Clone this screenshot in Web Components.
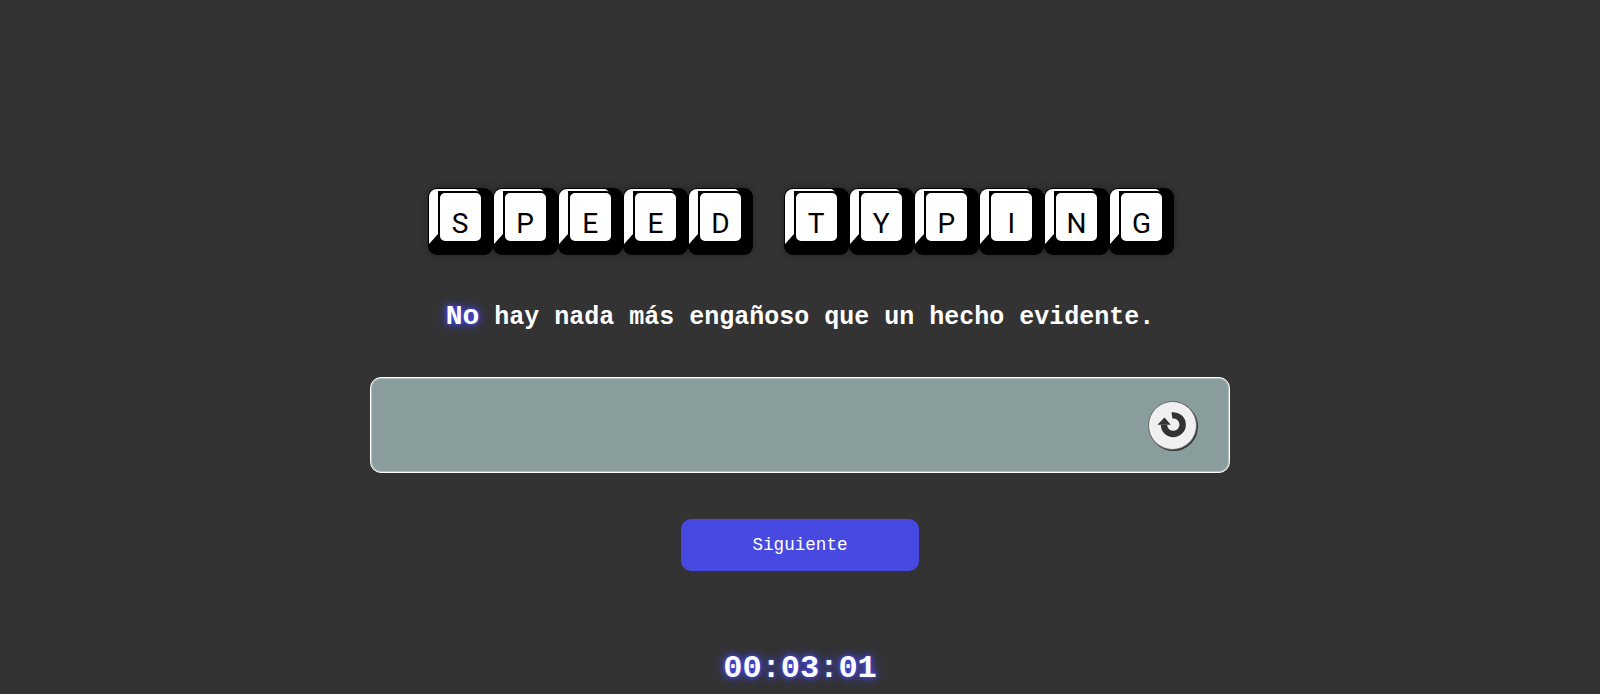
<!DOCTYPE html>
<html lang="es">
<head>
<meta charset="utf-8">
<title>Speed Typing</title>
<style>
html, body { margin: 0; height: 100%; background: #333333; overflow: hidden; }
</style>
</head>
<body>
<typing-app></typing-app>
<script>
class KeyCap extends HTMLElement {
  constructor() {
    super();
    this.attachShadow({ mode: 'open' }).innerHTML = `<style>
:host {
  display: block;
  box-sizing: border-box;
  width: 65.1px;
  height: 67px;
  flex: none;
  padding: 1px 14px 11px 1px;
  background: #000;
  border-radius: 9px;
  box-shadow: 0 0 8px rgba(0, 0, 0, .35);
  font: 400 28px/1 Roboto, sans-serif;
  color: #000;
}
.bevel {
  box-sizing: border-box;
  height: 55px;
  border-style: solid;
  border-width: 2.5px 0 10px 9px;
  border-color: #fff #000 #000 #fff;
  border-radius: 8px 5px 0 0;
}
/* the cap hangs past the bevel on the right and at the bottom */
.cap {
  box-sizing: border-box;
  height: 51.5px;
  margin-right: -4px;
  display: flex;
  align-items: flex-end;
  justify-content: center;
  padding-bottom: 2.5px;
  background: #fff;
  border: 2px solid #000;
  border-radius: 7px;
}
</style><div class="bevel"><div class="cap"><slot></slot></div></div>`;
  }
}
customElements.define('key-cap', KeyCap);

class KeyTitle extends HTMLElement {
  constructor() {
    super();
    let root = this.attachShadow({ mode: 'open' });
    let words = (this.getAttribute('text') || '').split(' ');
    root.innerHTML = `<style>
:host { display: flex; gap: 30.5px; margin-left: 1.6px; }
.word { display: flex; }
</style>` + words.map(w =>
      `<div class="word">${Array.from(w).map(c => `<key-cap>${c}</key-cap>`).join('')}</div>`
    ).join('');
  }
}
customElements.define('key-title', KeyTitle);

class TypingBox extends HTMLElement {
  constructor() {
    super();
    this.attachShadow({ mode: 'open' }).innerHTML = `<style>
:host {
  display: flex;
  box-sizing: border-box;
  width: 860px;
  height: 96px;
  align-items: center;
  justify-content: flex-end;
  padding-right: 32px;
  background: #8a9d9d;
  border: 1px solid #fff;
  border-radius: 11px;
  box-shadow: inset 0 0 0 1px rgba(255, 255, 255, .35);
}
button {
  display: flex;
  align-items: center;
  justify-content: center;
  width: 49px;
  height: 49px;
  padding: 0;
  border: 1px solid #666;
  border-radius: 50%;
  background: #f0f0f0;
  box-shadow: 1px 1px 0 #333;
}
</style><button aria-label="Reiniciar"><svg width="34" height="34" viewBox="0 0 32 32">
<path d="M15 7A8.8 8.8 0 1 1 7.5 15.7" fill="none" stroke="#333" stroke-width="6"/>
<path d="M1.3 15.7L8 9L14 15.7Z" fill="#333"/>
</svg></button>`;
  }
}
customElements.define('typing-box', TypingBox);

class NextButton extends HTMLElement {
  constructor() {
    super();
    this.attachShadow({ mode: 'open' }).innerHTML = `<style>
:host {
  display: flex;
  width: 238px;
  height: 52px;
  align-items: center;
  justify-content: center;
  background: #4849e0;
  border-radius: 10px;
  color: #fff;
  font: 400 17.6px "Liberation Mono", monospace;
}
</style><slot></slot>`;
  }
}
customElements.define('next-button', NextButton);

class TypingApp extends HTMLElement {
  constructor() {
    super();
    this.attachShadow({ mode: 'open' }).innerHTML = `<style>
:host {
  display: flex;
  flex-direction: column;
  align-items: center;
  padding-top: 188px;
  font-family: "Liberation Mono", monospace;
  color: #fff;
  --glow: 0 0 12px #4849e0, 0 0 6px #4849e0, 0 0 3px #4849e0;
}
.quote {
  margin-top: 48px;
  font-size: 25px;
  font-weight: 700;
  line-height: 29px;
}
.quote b { font-size: 28px; line-height: 0; text-shadow: var(--glow); }
typing-box { margin-top: 45px; }
next-button { margin-top: 46px; }
.timer {
  margin-top: 80px;
  font-size: 32px;
  font-weight: 700;
  line-height: 36px;
  text-shadow: var(--glow);
}
</style>
<key-title text="SPEED TYPING"></key-title>
<div class="quote"><b>No</b> hay nada más engañoso que un hecho evidente.</div>
<typing-box></typing-box>
<next-button>Siguiente</next-button>
<div class="timer">00:03:01</div>`;
  }
}
customElements.define('typing-app', TypingApp);
</script>
</body>
</html>
